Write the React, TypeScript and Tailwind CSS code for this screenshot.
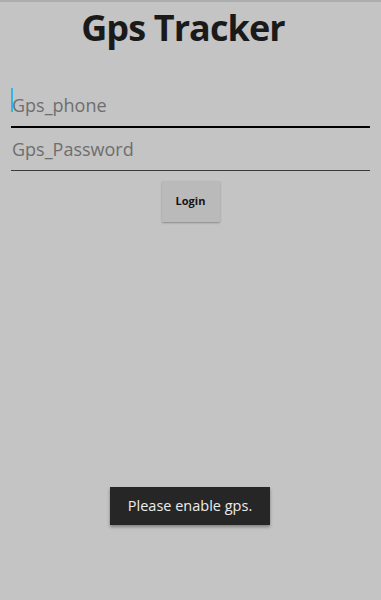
export default function App() {
  return (
    <div
      className="relative h-[600px] w-[381px] overflow-hidden bg-[#c4c4c4] border-t-2 border-[#adadad]"
      style={{ fontFamily: '"Open Sans", "Noto Sans", sans-serif' }}
    >
      {/* Title */}
      <h1 className="pr-[15px] text-center text-[36px] font-bold leading-[52px] tracking-[-0.9px] text-[#1a1a1a]">
        Gps Tracker
      </h1>

      {/* Form */}
      <div className="mt-[30px] px-[11px]">
        <div className="relative flex h-[44px] items-center border-b-2 border-black">
          <span className="absolute left-0 top-[4px] h-[24px] w-[2px] bg-[#33b5e5]" />
          <span className="pl-px text-[18px] text-[#6e6e6e]">Gps_phone</span>
        </div>
        <div className="flex h-[43px] items-center border-b-[1.5px] border-[#3a3a3a]">
          <span className="pl-px text-[18px] text-[#6e6e6e]">Gps_Password</span>
        </div>

        <div className="mt-[10px] flex justify-center">
          <button className="h-[41px] w-[58px] rounded-[1px] bg-[#bababa] text-[11px] font-bold text-[#141414] shadow-[0_1px_2px_rgba(0,0,0,0.3)]">
            Login
          </button>
        </div>
      </div>

      {/* Toast */}
      <div className="absolute left-[110px] top-[485px] flex h-[38px] w-[160px] items-center justify-center bg-[#262626] shadow-[0_2px_3px_rgba(0,0,0,0.35)]">
        <span className="text-[14.5px] text-[#ececec]">Please enable gps.</span>
      </div>
    </div>
  );
}
